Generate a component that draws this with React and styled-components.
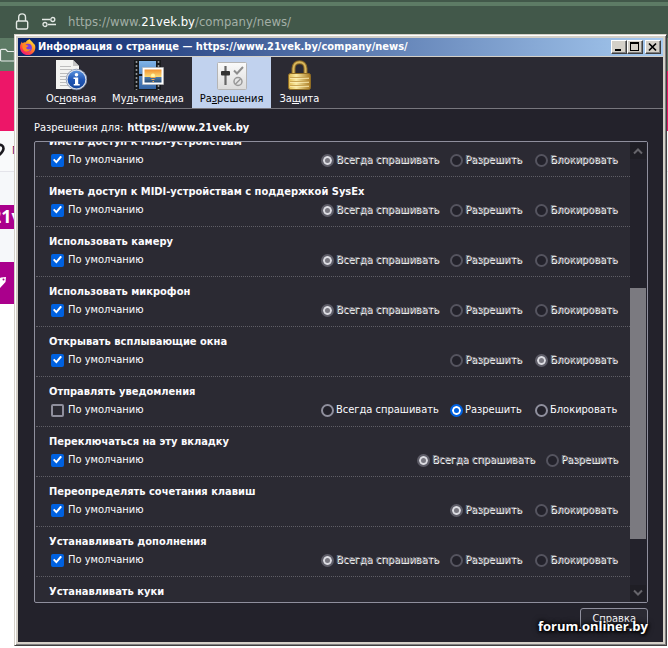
import { useLayoutEffect, useRef, useState } from "react";
import styled, { createGlobalStyle } from "styled-components";

const GlobalStyle = createGlobalStyle`
  :root {
    --color-chrome: #42584a;
    --color-chrome-light: #5d7b65;
    --color-pink: #ed1668;
    --color-purple: #aa008c;
    --color-frame: #d4d0c8;
    --color-dialog: #23222b;
    --color-panel: #2b2a33;
    --color-border: #8f8f9d;
    --color-accent: #0061e0;
    --color-text: #fbfbfe;
    --font-ui: "DejaVu Sans Condensed", "DejaVu Sans", sans-serif;
  }

  * {
    box-sizing: border-box;
  }

  body {
    margin: 0;
    overflow: hidden;
    background-color: #fff;
    font-family: var(--font-ui);
    font-size: 11px;
    line-height: 16px;
    color: var(--color-text);
  }
`;

const Desktop = styled.div`
  position: relative;
  min-height: 100vh;
  overflow: hidden;
`;

/* Browser behind the dialog */

const TabStrip = styled.div`
  height: 6px;
  background-color: var(--color-chrome-light);
  border-top: 2px solid var(--color-chrome);
`;

const AddressBar = styled.div`
  display: flex;
  align-items: center;
  gap: 12px;
  height: 32px;
  padding-left: 14px;
  background-color: var(--color-chrome);
`;

const Address = styled.span`
  font-size: 13px;
  color: #a3afa6;

  strong {
    font-weight: normal;
    color: #fff;
  }
`;

const Bookmarks = styled.div`
  height: 33px;
  padding-top: 9px;
  background-color: var(--color-chrome-light);
`;

const Banner = styled.div`
  height: 60px;
  background-color: var(--color-pink);
`;

const CityBar = styled.div`
  display: flex;
  align-items: center;
  gap: 6px;
  height: 41px;
  background-color: #f9fafb;
  border-bottom: 1px solid #e4e4ea;
  color: #7a1060;
`;

const SiteHeader = styled.div`
  height: 90px;
  padding-top: 33px;
  background-color: #f6f8fa;
`;

const SiteLogo = styled.div`
  width: 120px;
  height: 24px;
  background-color: var(--color-purple);
  font: bold 18px/22px "Open Sans", sans-serif;
  text-indent: -9px;
  color: #fff;
`;

const PromoTile = styled.div`
  display: flex;
  align-items: center;
  width: 120px;
  height: 42px;
  background-color: var(--color-purple);
`;

/* Dialog window */

const Window = styled.section`
  position: absolute;
  inset: 34px 1px 2px 14px;
  display: flex;
  flex-direction: column;
  padding: 3px;
  border: 1px solid;
  border-color: var(--color-frame) #404040 #404040 var(--color-frame);
  background-color: var(--color-frame);
  box-shadow: inset 1px 1px #fff, inset -1px -1px #808080;
`;

const TitleBar = styled.header`
  display: flex;
  align-items: center;
  height: 18px;
  margin-bottom: 1px;
  padding: 0 2px;
  background: linear-gradient(to right, #0a246a, #a6caf0);
`;

const Title = styled.h1`
  flex: 1;
  margin: 0;
  padding-left: 2px;
  overflow: hidden;
  white-space: nowrap;
  font: bold 11px/18px var(--font-ui);
  color: #fff;
`;

const CaptionButton = styled.button`
  display: grid;
  place-content: center;
  width: 16px;
  height: 14px;
  margin-left: ${(p) => (p.$apart ? "2px" : "0")};
  padding: 0;
  border: 1px solid;
  border-color: #fff #404040 #404040 #fff;
  background-color: var(--color-frame);
  box-shadow: inset -1px -1px #808080;
`;

const Toolbar = styled.nav`
  display: flex;
  height: 52px;
  padding-left: 20px;
  border-bottom: 1px solid #77767d;
  background-color: var(--color-panel);
`;

const Tab = styled.button`
  display: flex;
  flex-direction: column;
  align-items: center;
  padding: 2px 8px 0;
  border: 0;
  background-color: ${(p) => (p.$active ? "#c1d2ee" : "transparent")};
  font: inherit;
  color: ${(p) => (p.$active ? "#000" : "var(--color-text)")};
  white-space: nowrap;

  svg {
    display: block;
  }
`;

const Body = styled.main`
  flex: 1;
  display: flex;
  flex-direction: column;
  gap: 5px;
  min-height: 0;
  padding: 11px 15px 13px 16px;
  background-color: var(--color-dialog);
`;

const HostLine = styled.div`
  display: flex;
  gap: 4px;
`;

const ListBox = styled.div`
  flex: 1;
  display: flex;
  min-height: 0;
  border: 1px solid var(--color-border);
  border-radius: 2px;
  background-color: var(--color-panel);
`;

const Rows = styled.div`
  flex: 1;
  min-width: 0;
  padding-left: 1px;
  overflow: hidden;
`;

const Row = styled.fieldset`
  min-width: 0;
  height: 50px;
  margin: 0;
  padding: 7px 13px 0;
  border: 0;
  border-bottom: 1px dotted #5f5e66;
`;

const RowTitle = styled.div`
  height: 16px;
  margin-bottom: 2px;
  white-space: nowrap;
  font-weight: bold;
`;

const Controls = styled.div`
  display: flex;
  align-items: center;
  gap: 14px;
  height: 16px;
  padding-left: 2px;
`;

const CheckLabel = styled.label`
  display: flex;
  align-items: center;
  gap: 4px;
  margin-right: auto;
  white-space: nowrap;
`;

const Checkbox = styled.input`
  appearance: none;
  display: grid;
  place-content: center;
  width: 13px;
  height: 13px;
  margin: 0;
  border: 2px solid var(--color-border);
  border-radius: 2px;

  &:checked {
    border-color: var(--color-accent);
    background-color: var(--color-accent);
  }

  &:checked::after {
    content: "";
    width: 9px;
    height: 9px;
    background-color: #fff;
    clip-path: polygon(0 50%, 16% 36%, 36% 58%, 82% 4%, 100% 18%, 38% 90%);
  }
`;

const RadioLabel = styled.label`
  display: flex;
  align-items: center;
  gap: 2px;
  width: ${(p) => p.$width}px;
  white-space: nowrap;
  color: ${(p) => (p.$disabled ? "#83828a" : "var(--color-text)")};
  text-shadow: ${(p) => (p.$disabled ? "1px 1px #fff" : "none")};
`;

const Radio = styled.input.attrs({ type: "radio" })`
  appearance: none;
  flex: none;
  width: 13px;
  height: 13px;
  margin: 0;
  border: 2px solid var(--color-border);
  border-radius: 50%;
  background-color: #23222b;

  &:disabled {
    border-color: #55545f;
  }

  &:checked {
    border: 2px solid var(--color-accent);
    background-color: var(--color-accent);
    box-shadow: inset 0 0 0 2px #fff;
  }

  &:checked:disabled {
    border-color: #5e5d68;
    background-color: #77767f;
    box-shadow: inset 0 0 0 2px #dcdce2;
  }
`;

const ScrollBar = styled.div`
  display: flex;
  flex-direction: column;
  width: 17px;
  padding: 1px 1px 1px 0;
  background-color: #23222b;
`;

const ScrollButton = styled.button`
  display: grid;
  place-content: center;
  height: 16px;
  padding: 0;
  border: 0;
  background-color: #1f1e25;
`;

const Track = styled.div`
  flex: 1;
  display: grid;
  grid-template-rows: 129fr 251fr 46fr;
`;

const Thumb = styled.div`
  grid-row: 2;
  background-color: #7b7a80;
`;

const HelpButton = styled.button`
  align-self: flex-end;
  height: 21px;
  padding: 0 11px;
  border: 1px solid var(--color-border);
  border-radius: 3px;
  background-color: var(--color-panel);
  font: inherit;
  color: var(--color-text);
`;

const Watermark = styled.div`
  position: absolute;
  right: 20px;
  bottom: 13px;
  font: bold 13px/18px "Open Sans", sans-serif;
  color: #fff;
  text-shadow: 0 0 3px #000, 1px 1px 3px #000, 0 0 6px #000;
`;

const LockIcon = () => (
  <svg width="16" height="18" viewBox="0 0 16 18" fill="none" stroke="#e3e8e4" strokeWidth="1.4">
    <rect x="2.5" y="8" width="11.2" height="8" rx="1.5" />
    <path d="M4.700 8V4.300a3.400 3.400 0 0 1 6.800 0V8" />
  </svg>
);

const SlidersIcon = () => (
  <svg width="14" height="12" viewBox="0 0 14 12" fill="none" stroke="#e3e8e4" strokeWidth="1.3">
    <path d="M0 3.5h8M6 8.5h8" />
    <circle cx="10.8" cy="3.5" r="2" />
    <circle cx="3" cy="8.5" r="2" />
  </svg>
);

const FolderIcon = () => (
  <svg width="16" height="16" viewBox="0 0 16 16" fill="none" stroke="#e8ece9" strokeWidth="1.2">
    <path d="M.5 13V3.5a1.200 1.200 0 0 1 1.200-1.200h4L7.500 4.500h7v9.500H1.700A1.200 1.200 0 0 1 .5 13z" />
  </svg>
);

const PinIcon = () => (
  <svg width="6" height="18" viewBox="0 0 6 18">
    <path d="M-2 3.500C1 2 3.500 3.500 3.500 6.500S1.500 11-2 14" fill="none" stroke="#1c1a20" strokeWidth="2.600" />
  </svg>
);

const TagIcon = () => (
  <svg width="8" height="14" viewBox="0 0 8 14">
    <path d="M-2 3 1 1.500 6 1 5.500 6-1 13-4 9z" fill="#fff" />
    <circle cx="3.500" cy="3.500" r="1" fill="#aa008c" />
  </svg>
);

const FirefoxIcon = () => (
  <svg width="16" height="16" viewBox="0 0 16 16">
    <defs>
      <linearGradient id="flame" x1=".85" y1="0" x2=".2" y2="1">
        <stop offset="0" stopColor="#fff044" />
        <stop offset=".4" stopColor="#ff9a1f" />
        <stop offset=".75" stopColor="#ff3b47" />
        <stop offset="1" stopColor="#e3148c" />
      </linearGradient>
    </defs>
    <path
      d="M9.500 0c1 1.500 2 2 3 3.200.5.500.8 1 .9 1.400.7.300 1.400 1.200 1.700 2C16.200 11.500 12.800 16 8 16S0 12.500 0 8.200C0 5.800 1 4 2 2.600c0 .7.200 1.200.6 1.600C3.600 3.400 4.500 3.200 5.500 3.400 7 1.200 8 1 9.500 0z"
      fill="url(#flame)"
    />
    <circle cx="8" cy="8.600" r="3.900" fill="#7a3fe0" />
    <path d="M2.600 5.500c1.800-1 3.200-.3 4.200.7 1 .2 1.500.5 1.700.9-.5.900-2 .8-2.300 1.700.3 1.700 2.600 2.200 4.500 1-1 3-5.200 3.700-7.200 1.200C2.300 9.600 2 7.500 2.600 5.500z" fill="#ff8a20" />
  </svg>
);

const InfoIcon = () => (
  <svg width="32" height="32" viewBox="0 0 32 32">
    <defs>
      <linearGradient id="blue" x2="0" y2="1">
        <stop offset="0" stopColor="#5b93de" />
        <stop offset=".5" stopColor="#2257b5" />
        <stop offset="1" stopColor="#14479f" />
      </linearGradient>
    </defs>
    <path d="M1 1h17l6 6v23H1z" fill="#f3f3f1" />
    <path d="M18 1v6h6z" fill="#c4c4c4" />
    <path d="M5 7.500h11M5 10.500h12M5 14.500h9M5 17.500h6M5 20.500h6M5 23.500h6M5 26.500h8" stroke="#bdbdbd" />
    <circle cx="21.500" cy="20.500" r="10.300" fill="#e5e8ee" stroke="#7b8cab" strokeWidth=".8" />
    <circle cx="21.500" cy="20.500" r="8.900" fill="url(#blue)" />
    <circle cx="21.500" cy="15.700" r="1.800" fill="#fff" />
    <path d="M18.500 18.500h4.700V25h1.500v1.500h-6V25H20v-5h-1.500z" fill="#fff" />
  </svg>
);

const MediaIcon = () => (
  <svg width="32" height="32" viewBox="0 0 32 32">
    <defs>
      <linearGradient id="film" x2="0" y2="1">
        <stop offset="0" stopColor="#80b4e8" />
        <stop offset="1" stopColor="#3465a4" />
      </linearGradient>
      <linearGradient id="sunset" x2="0" y2="1">
        <stop offset="0" stopColor="#f0912f" />
        <stop offset=".55" stopColor="#fcd873" />
        <stop offset=".6" stopColor="#4c78a8" />
        <stop offset="1" stopColor="#254a72" />
      </linearGradient>
    </defs>
    <path d="M2 1h27v30H2z" fill="#17191c" />
    <path d="M4.500 2v29M26.500 2v29" stroke="#8e9294" strokeWidth="1.600" strokeDasharray="2 2" />
    <path d="M7 2h17v13H7zM7 17h17v13H7z" fill="url(#film)" />
    <path d="M10.500 8.500h21v17h-21z" fill="#fff" stroke="#b6b6b6" strokeWidth=".6" />
    <path d="M12.500 10.500h17v13h-17z" fill="url(#sunset)" />
    <circle cx="21" cy="16.500" r="2" fill="#fff6a5" />
    <path d="M18.500 18.500h5M19.500 20.500h3M20.500 22.500h1.500" stroke="#f7ab4c" />
  </svg>
);

const PermissionsIcon = () => (
  <svg width="32" height="32" viewBox="0 0 32 32">
    <defs>
      <linearGradient id="plate" x2="0" y2="1">
        <stop offset="0" stopColor="#fafafa" />
        <stop offset="1" stopColor="#dcdcdc" />
      </linearGradient>
    </defs>
    <rect x="1.500" y="3.500" width="29" height="27" rx="1" fill="url(#plate)" stroke="#b5b5b5" />
    <path d="M9.500 7v19" stroke="#666" strokeWidth="2.200" />
    <rect x="5" y="12" width="9" height="4.500" rx="1" fill="#333" />
    <path d="m18 11.500 3 3L27 8" fill="none" stroke="#8d8d8d" strokeWidth="2" />
    <circle cx="22" cy="22.500" r="4" fill="none" stroke="#999" strokeWidth="1.500" />
    <path d="m19.300 25.200 5.400-5.400" stroke="#999" strokeWidth="1.500" />
  </svg>
);

const PadlockIcon = () => (
  <svg width="32" height="32" viewBox="0 0 32 32">
    <defs>
      <linearGradient id="gold">
        <stop offset="0" stopColor="#dfb94f" />
        <stop offset=".35" stopColor="#f9eaa4" />
        <stop offset="1" stopColor="#a97a22" />
      </linearGradient>
    </defs>
    <path d="M10.500 15V9.500c0-8.500 12-8.500 12 0V15" fill="none" stroke="#8a6927" strokeWidth="4" />
    <path d="M10.500 15V9.500c0-8.500 12-8.500 12 0V15" fill="none" stroke="#d9b85d" strokeWidth="2" />
    <rect x="5.500" y="14.500" width="22" height="16" rx="2" fill="url(#gold)" stroke="#8f6c24" />
    <path d="M7 18.500h19M7 22.500h19M7 26.500h19" stroke="#c9a452" />
    <path d="M7 19.500h19M7 23.500h19M7 27.500h19" stroke="#fff1b8" strokeWidth=".7" />
  </svg>
);

const Arrow = ({ d }) => (
  <svg width="10" height="8" viewBox="0 0 10 8" fill="none" stroke="#66656b" strokeWidth="2">
    <path d={d} />
  </svg>
);

const tabs = [
  { label: ["Ос", "н", "овная"], Icon: InfoIcon },
  { label: ["Му", "л", "ьтимедиа"], Icon: MediaIcon },
  { label: ["Ра", "з", "решения"], Icon: PermissionsIcon },
  { label: ["За", "щ", "ита"], Icon: PadlockIcon },
];

const options = {
  ask: { text: "Всегда спрашивать", width: 115 },
  allow: { text: "Разрешить", width: 71 },
  block: { text: "Блокировать", width: 82 },
};

const all = ["ask", "allow", "block"];

const permissions = [
  { id: "midi", title: "Иметь доступ к MIDI-устройствам", choices: all, value: "ask" },
  { id: "sysex", title: "Иметь доступ к MIDI-устройствам с поддержкой SysEx", choices: all, value: "ask" },
  { id: "camera", title: "Использовать камеру", choices: all, value: "ask" },
  { id: "microphone", title: "Использовать микрофон", choices: all, value: "ask" },
  { id: "popup", title: "Открывать всплывающие окна", choices: ["allow", "block"], value: "block" },
  { id: "notification", title: "Отправлять уведомления", choices: all, value: "allow", custom: true },
  { id: "focus-tab", title: "Переключаться на эту вкладку", choices: ["ask", "allow"], value: "ask" },
  { id: "shortcuts", title: "Переопределять сочетания клавиш", choices: ["allow", "block"], value: "allow" },
  { id: "install", title: "Устанавливать дополнения", choices: all, value: "ask" },
  { id: "cookie", title: "Устанавливать куки", choices: ["allow", "block"], value: "allow" },
];

function Permission({ id, title, choices, value, custom }) {
  const [byDefault, setByDefault] = useState(!custom);
  const [selected, setSelected] = useState(value);

  return (
    <Row aria-label={title}>
      <RowTitle>{title}</RowTitle>
      <Controls>
        <CheckLabel>
          <Checkbox
            type="checkbox"
            checked={byDefault}
            onChange={(e) => setByDefault(e.target.checked)}
          />
          По умолчанию
        </CheckLabel>
        {choices.map((choice) => (
          <RadioLabel
            key={choice}
            $disabled={byDefault}
            $width={options[choice].width}
          >
            <Radio
              name={id}
              disabled={byDefault}
              checked={selected === choice}
              onChange={() => setSelected(choice)}
            />
            {options[choice].text}
          </RadioLabel>
        ))}
      </Controls>
    </Row>
  );
}

function Browser() {
  return (
    <div>
      <TabStrip />
      <AddressBar>
        <LockIcon />
        <SlidersIcon />
        <Address>
          https://www.<strong>21vek.by</strong>/company/news/
        </Address>
      </AddressBar>
      <Bookmarks>
        <FolderIcon />
      </Bookmarks>
      <Banner />
      <CityBar>
        <PinIcon />П
      </CityBar>
      <SiteHeader>
        <SiteLogo>21vek</SiteLogo>
      </SiteHeader>
      <PromoTile>
        <TagIcon />
      </PromoTile>
    </div>
  );
}

function App() {
  const rows = useRef(null);

  useLayoutEffect(() => {
    rows.current.scrollTop = 15;
  }, []);

  const scroll = (delta) => rows.current.scrollBy(0, delta);

  return (
    <Desktop>
      <GlobalStyle />
      <Browser />
      <Window>
        <TitleBar>
          <FirefoxIcon />
          <Title>
            Информация о странице — https://www.21vek.by/company/news/
          </Title>
          <CaptionButton aria-label="Свернуть">
            <svg width="10" height="10">
              <path d="M1 7h6v2H1z" />
            </svg>
          </CaptionButton>
          <CaptionButton aria-label="Развернуть">
            <svg width="10" height="10">
              <path d="M0 0h9v9H0zM1 2v6h7V2z" fillRule="evenodd" />
            </svg>
          </CaptionButton>
          <CaptionButton aria-label="Закрыть" $apart>
            <svg width="10" height="10">
              <path d="m1 1.500 7 7m0-7-7 7" stroke="#000" strokeWidth="1.700" />
            </svg>
          </CaptionButton>
        </TitleBar>
        <Toolbar>
          {tabs.map(({ label, Icon }, i) => (
            <Tab key={label[1]} type="button" $active={i === 2}>
              <Icon />
              <span>
                {label[0]}
                <u>{label[1]}</u>
                {label[2]}
              </span>
            </Tab>
          ))}
        </Toolbar>
        <Body>
          <HostLine>
            Разрешения для: <strong>https://www.21vek.by</strong>
          </HostLine>
          <ListBox>
            <Rows ref={rows}>
              {permissions.map((p) => (
                <Permission key={p.id} {...p} />
              ))}
            </Rows>
            <ScrollBar>
              <ScrollButton aria-label="Вверх" onClick={() => scroll(-50)}>
                <Arrow d="M1 6.500 5 2.500l4 4" />
              </ScrollButton>
              <Track>
                <Thumb />
              </Track>
              <ScrollButton aria-label="Вниз" onClick={() => scroll(50)}>
                <Arrow d="m1 1.500 4 4 4-4" />
              </ScrollButton>
            </ScrollBar>
          </ListBox>
          <HelpButton type="button">Справка</HelpButton>
        </Body>
      </Window>
      <Watermark>forum.onliner.by</Watermark>
    </Desktop>
  );
}

export default App;
